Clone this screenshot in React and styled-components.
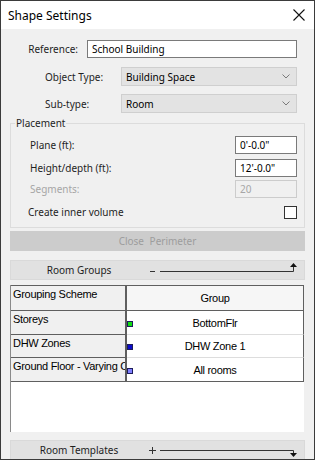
import React from 'react';
import styled, { createGlobalStyle } from 'styled-components';

const GlobalStyle = createGlobalStyle`
  html, body { margin: 0; padding: 0; background: #ffffff; }
  body { font-family: "Noto Sans", "Segoe UI", sans-serif; }
`;

const Window = styled.div`
  width: 315px;
  height: 460px;
  box-sizing: border-box;
  border: 1px solid #3b3b3b;
  background: #f0f0f0;
  display: flex;
  flex-direction: column;
  overflow: hidden;
`;

const TitleBar = styled.div`
  height: 28px;
  flex: none;
  background: #ffffff;
  display: flex;
  align-items: center;
  justify-content: space-between;
  padding: 0 9px 0 7px;
  font-size: 12px;
  color: #000;
`;

const Body = styled.div`
  padding: 11px 9px 0 9px;
  display: flex;
  flex-direction: column;
`;

const FieldRow = styled.div`
  display: flex;
  align-items: center;
  height: ${p => p.$h || 18}px;
  margin-top: ${p => p.$mt || 0}px;
`;

const Label = styled.span`
  flex: ${p => (p.$w ? 'none' : '1')};
  width: ${p => (p.$w ? `${p.$w}px` : 'auto')};
  box-sizing: border-box;
  padding-left: ${p => p.$pl || 0}px;
  padding-right: ${p => p.$pr || 0}px;
  text-align: ${p => p.$align || 'left'};
  font-size: 10px;
  color: ${p => (p.$disabled ? '#a6a6a6' : '#1e1e1e')};
  white-space: nowrap;
`;

const TextBox = styled.div`
  width: ${p => p.$w}px;
  height: 18px;
  box-sizing: border-box;
  border: 1px solid ${p => (p.$disabled ? '#cccccc' : '#7a7a7a')};
  background: ${p => (p.$disabled ? '#f0f0f0' : '#ffffff')};
  color: ${p => (p.$disabled ? '#a6a6a6' : '#000')};
  padding-left: 4px;
  font-size: 10px;
  display: flex;
  align-items: center;
`;

const Select = styled.div`
  width: 176px;
  height: 19px;
  box-sizing: border-box;
  border: 1px solid #cfcfcf;
  background: #e3e3e3;
  padding: 0 6px 0 4px;
  font-size: 10px;
  color: #000;
  display: flex;
  align-items: center;
  justify-content: space-between;
`;

const Group = styled.fieldset`
  margin: 3px 0 0 0;
  padding: 6px 7px 6px 4px;
  border: 1px solid #dcdcdc;
  min-width: 0;
`;

const Legend = styled.legend`
  padding: 0 1px;
  font-size: 10px;
  line-height: 14px;
  color: #1e1e1e;
`;

const Check = styled.div`
  width: 13px;
  height: 13px;
  box-sizing: border-box;
  border: 1px solid #333333;
  background: #ffffff;
`;

const WideButton = styled.div`
  margin-top: 3px;
  height: 20px;
  background: #cccccc;
  color: #9d9d9d;
  font-size: 10px;
  word-spacing: 3px;
  display: flex;
  align-items: center;
  justify-content: center;
`;

const FoldBar = styled.div`
  margin-top: ${p => p.$mt}px;
  height: 20px;
  flex: none;
  box-sizing: border-box;
  border: 1px solid #d9d9d9;
  background: #e1e1e1;
  display: flex;
  align-items: center;
`;

const FoldTitle = styled.span`
  width: 136px;
  flex: none;
  text-align: center;
  font-size: 10px;
  color: #1e1e1e;
`;

const GridArea = styled.div`
  margin-top: 5px;
  width: 294px;
  height: 147px;
  box-sizing: border-box;
  background: #ffffff;
  border-left: 1px solid #8a8a8a;
  display: flex;
  flex-direction: column;
`;

const Table = styled.div`
  display: grid;
  grid-template-columns: 116px 177px;
  border-top: 1px solid #5f5f5f;
  font-family: "Liberation Sans", Arial, sans-serif;
  font-size: 11px;
  letter-spacing: -0.3px;
  color: #000;
`;

const SchemeCell = styled.div`
  height: ${p => p.$h}px;
  box-sizing: border-box;
  background: #f0f0f0;
  border-right: 2px solid #5f5f5f;
  border-bottom: 1px solid #5f5f5f;
  padding: 2px 0 0 2px;
  white-space: nowrap;
  overflow: hidden;
`;

const GroupCell = styled.div`
  height: ${p => p.$h}px;
  box-sizing: border-box;
  background: ${p => (p.$head ? '#f6f6f6' : '#ffffff')};
  border-right: 1px solid #5f5f5f;
  border-bottom: 1px solid ${p => (p.$head || p.$last ? '#5f5f5f' : '#dddddd')};
  display: grid;
  grid-template-columns: 6px 1fr 6px;
  align-items: center;
  text-align: center;
`;

const Swatch = styled.span`
  width: 6px;
  height: 6px;
  box-sizing: border-box;
  border: 1px solid #1c1c5a;
  background: ${p => p.$color};
  margin-top: 2px;
`;

const Chevron = () => (
  <svg width="8" height="5" viewBox="0 0 8 5">
    <path d="M0.5 0.5 L4 4 L7.5 0.5" fill="none" stroke="#7a7a7a" strokeWidth="1" />
  </svg>
);

const CloseIcon = () => (
  <svg width="12" height="12" viewBox="0 0 12 12">
    <path d="M0.5 0.5 L11.5 11.5 M11.5 0.5 L0.5 11.5" stroke="#111" strokeWidth="1.1" />
  </svg>
);

const groups = [
  { scheme: 'Storeys', group: 'BottomFlr', color: '#11dd11', h: 24 },
  { scheme: 'DHW Zones', group: 'DHW Zone 1', color: '#0c0ccc', h: 23 },
  { scheme: 'Ground Floor - Varying C', group: 'All rooms', color: '#7f7fff', h: 24, last: true },
];

export default function App() {
  return (
    <>
      <GlobalStyle />
      <Window>
        <TitleBar>
          <span>Shape Settings</span>
          <CloseIcon />
        </TitleBar>
        <Body>
          <FieldRow>
            <Label $w={77} $pr={9} $align="right">Reference:</Label>
            <TextBox $w={210}>School Building</TextBox>
          </FieldRow>
          <FieldRow $h={19} $mt={9}>
            <Label $w={111} $pl={35}>Object Type:</Label>
            <Select>Building Space<Chevron /></Select>
          </FieldRow>
          <FieldRow $h={19} $mt={8}>
            <Label $w={111} $pl={35}>Sub-type:</Label>
            <Select>Room<Chevron /></Select>
          </FieldRow>

          <Group>
            <Legend>Placement</Legend>
            <FieldRow>
              <Label $pl={15}>Plane (ft):</Label>
              <TextBox $w={62}>0'-0.0"</TextBox>
            </FieldRow>
            <FieldRow $mt={5}>
              <Label $pl={15}>Height/depth (ft):</Label>
              <TextBox $w={62}>12'-0.0"</TextBox>
            </FieldRow>
            <FieldRow $mt={3}>
              <Label $pl={15} $disabled>Segments:</Label>
              <TextBox $w={62} $disabled>20</TextBox>
            </FieldRow>
            <FieldRow $mt={5}>
              <Label $pl={13}>Create inner volume</Label>
              <Check />
            </FieldRow>
          </Group>

          <WideButton>Close Perimeter</WideButton>

          <FoldBar $mt={9}>
            <FoldTitle>Room Groups</FoldTitle>
            <svg width="157" height="18" viewBox="0 0 157 18">
              <path d="M3 10.5 H8" stroke="#333" strokeWidth="1" />
              <path d="M13 10.5 H146.5 V5" fill="none" stroke="#333" strokeWidth="1" />
              <path d="M143 6 L150 6 L146.5 2 Z" fill="#111" />
            </svg>
          </FoldBar>

          <GridArea>
            <Table>
              <SchemeCell $h={25}>Grouping Scheme</SchemeCell>
              <GroupCell $h={25} $head><span /><span>Group</span><span /></GroupCell>
              {groups.map(g => (
                <React.Fragment key={g.scheme}>
                  <SchemeCell $h={g.h}>{g.scheme}</SchemeCell>
                  <GroupCell $h={g.h} $last={g.last}>
                    <Swatch $color={g.color} />
                    <span>{g.group}</span>
                    <span />
                  </GroupCell>
                </React.Fragment>
              ))}
            </Table>
          </GridArea>

          <FoldBar $mt={8}>
            <FoldTitle>Room Templates</FoldTitle>
            <svg width="157" height="18" viewBox="0 0 157 18">
              <path d="M5.5 6 V13 M2 9.5 H9" stroke="#333" strokeWidth="1" />
              <path d="M13 9.5 H146.5 V13" fill="none" stroke="#333" strokeWidth="1" />
              <path d="M143 12 L150 12 L146.5 16 Z" fill="#111" />
            </svg>
          </FoldBar>
        </Body>
      </Window>
    </>
  );
}
